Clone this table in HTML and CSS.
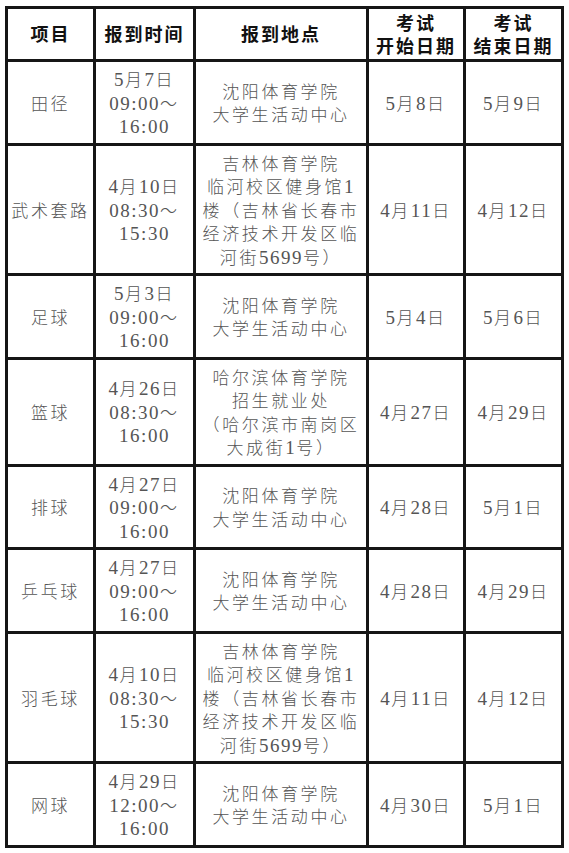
FILE: index.html
```html
<!DOCTYPE html>
<html>
<head>
<meta charset="utf-8">
<title>报到安排</title>
<link rel="stylesheet" href="styles.css">
</head>
<body>
<table class="sched">
  <colgroup>
    <col class="c1"><col class="c2"><col class="c3"><col class="c4"><col class="c5">
  </colgroup>
  <thead>
    <tr class="head">
      <th>项目</th>
      <th>报到时间</th>
      <th>报到地点</th>
      <th>考试<br>开始日期</th>
      <th>考试<br>结束日期</th>
    </tr>
  </thead>
  <tbody>
    <tr>
      <td>田径</td>
      <td><span class="n">5</span>月<span class="n">7</span>日<br><span class="n">09:00</span>～<br><span class="n">16:00</span></td>
      <td>沈阳体育学院<br>大学生活动中心</td>
      <td><span class="n">5</span>月<span class="n">8</span>日</td>
      <td><span class="n">5</span>月<span class="n">9</span>日</td>
    </tr>
    <tr>
      <td>武术套路</td>
      <td><span class="n">4</span>月<span class="n">10</span>日<br><span class="n">08:30</span>～<br><span class="n">15:30</span></td>
      <td>吉林体育学院<br>临河校区健身馆<span class="n">1</span><br>楼（吉林省长春市<br>经济技术开发区临<br>河街<span class="n">5699</span>号）</td>
      <td><span class="n">4</span>月<span class="n">11</span>日</td>
      <td><span class="n">4</span>月<span class="n">12</span>日</td>
    </tr>
    <tr>
      <td>足球</td>
      <td><span class="n">5</span>月<span class="n">3</span>日<br><span class="n">09:00</span>～<br><span class="n">16:00</span></td>
      <td>沈阳体育学院<br>大学生活动中心</td>
      <td><span class="n">5</span>月<span class="n">4</span>日</td>
      <td><span class="n">5</span>月<span class="n">6</span>日</td>
    </tr>
    <tr>
      <td>篮球</td>
      <td><span class="n">4</span>月<span class="n">26</span>日<br><span class="n">08:30</span>～<br><span class="n">16:00</span></td>
      <td>哈尔滨体育学院<br>招生就业处<br>（哈尔滨市南岗区<br>大成街<span class="n">1</span>号）</td>
      <td><span class="n">4</span>月<span class="n">27</span>日</td>
      <td><span class="n">4</span>月<span class="n">29</span>日</td>
    </tr>
    <tr>
      <td>排球</td>
      <td><span class="n">4</span>月<span class="n">27</span>日<br><span class="n">09:00</span>～<br><span class="n">16:00</span></td>
      <td>沈阳体育学院<br>大学生活动中心</td>
      <td><span class="n">4</span>月<span class="n">28</span>日</td>
      <td><span class="n">5</span>月<span class="n">1</span>日</td>
    </tr>
    <tr>
      <td>乒乓球</td>
      <td><span class="n">4</span>月<span class="n">27</span>日<br><span class="n">09:00</span>～<br><span class="n">16:00</span></td>
      <td>沈阳体育学院<br>大学生活动中心</td>
      <td><span class="n">4</span>月<span class="n">28</span>日</td>
      <td><span class="n">4</span>月<span class="n">29</span>日</td>
    </tr>
    <tr>
      <td>羽毛球</td>
      <td><span class="n">4</span>月<span class="n">10</span>日<br><span class="n">08:30</span>～<br><span class="n">15:30</span></td>
      <td>吉林体育学院<br>临河校区健身馆<span class="n">1</span><br>楼（吉林省长春市<br>经济技术开发区临<br>河街<span class="n">5699</span>号）</td>
      <td><span class="n">4</span>月<span class="n">11</span>日</td>
      <td><span class="n">4</span>月<span class="n">12</span>日</td>
    </tr>
    <tr>
      <td>网球</td>
      <td><span class="n">4</span>月<span class="n">29</span>日<br><span class="n">12:00</span>～<br><span class="n">16:00</span></td>
      <td>沈阳体育学院<br>大学生活动中心</td>
      <td><span class="n">4</span>月<span class="n">30</span>日</td>
      <td><span class="n">5</span>月<span class="n">1</span>日</td>
    </tr>
  </tbody>
</table>
</body>
</html>
```
FILE: styles.css
```css
html, body {
  margin: 0;
  padding: 0;
  background: #ffffff;
}

body {
  padding: 6px 5px 0 5px;
  font-family: "Noto Sans CJK SC", sans-serif;
}

.sched {
  border-collapse: collapse;
  table-layout: fixed;
  width: 559px;
}

.c1 { width: 88px; }
.c2 { width: 100px; }
.c3 { width: 173px; }
.c4 { width: 97px; }
.c5 { width: 98px; }

.sched th,
.sched td {
  border: 3px solid #161616;
  text-align: center;
  vertical-align: middle;
  white-space: nowrap;
  overflow: hidden;
}

.sched th {
  height: 50px;
  padding: 0;
  font-size: 18px;
  line-height: 23.5px;
  font-weight: 700;
  color: #111111;
  letter-spacing: 2px;
}

.sched td {
  padding: 5px 0;
  font-size: 17px;
  line-height: 23.5px;
  font-weight: 300;
  color: #555555;
  letter-spacing: 2.6px;
}

.n {
  font-family: "Liberation Serif", "Times New Roman", serif;
  font-size: 19px;
  font-weight: 400;
  line-height: 0;
  letter-spacing: 1.5px;
}
```
